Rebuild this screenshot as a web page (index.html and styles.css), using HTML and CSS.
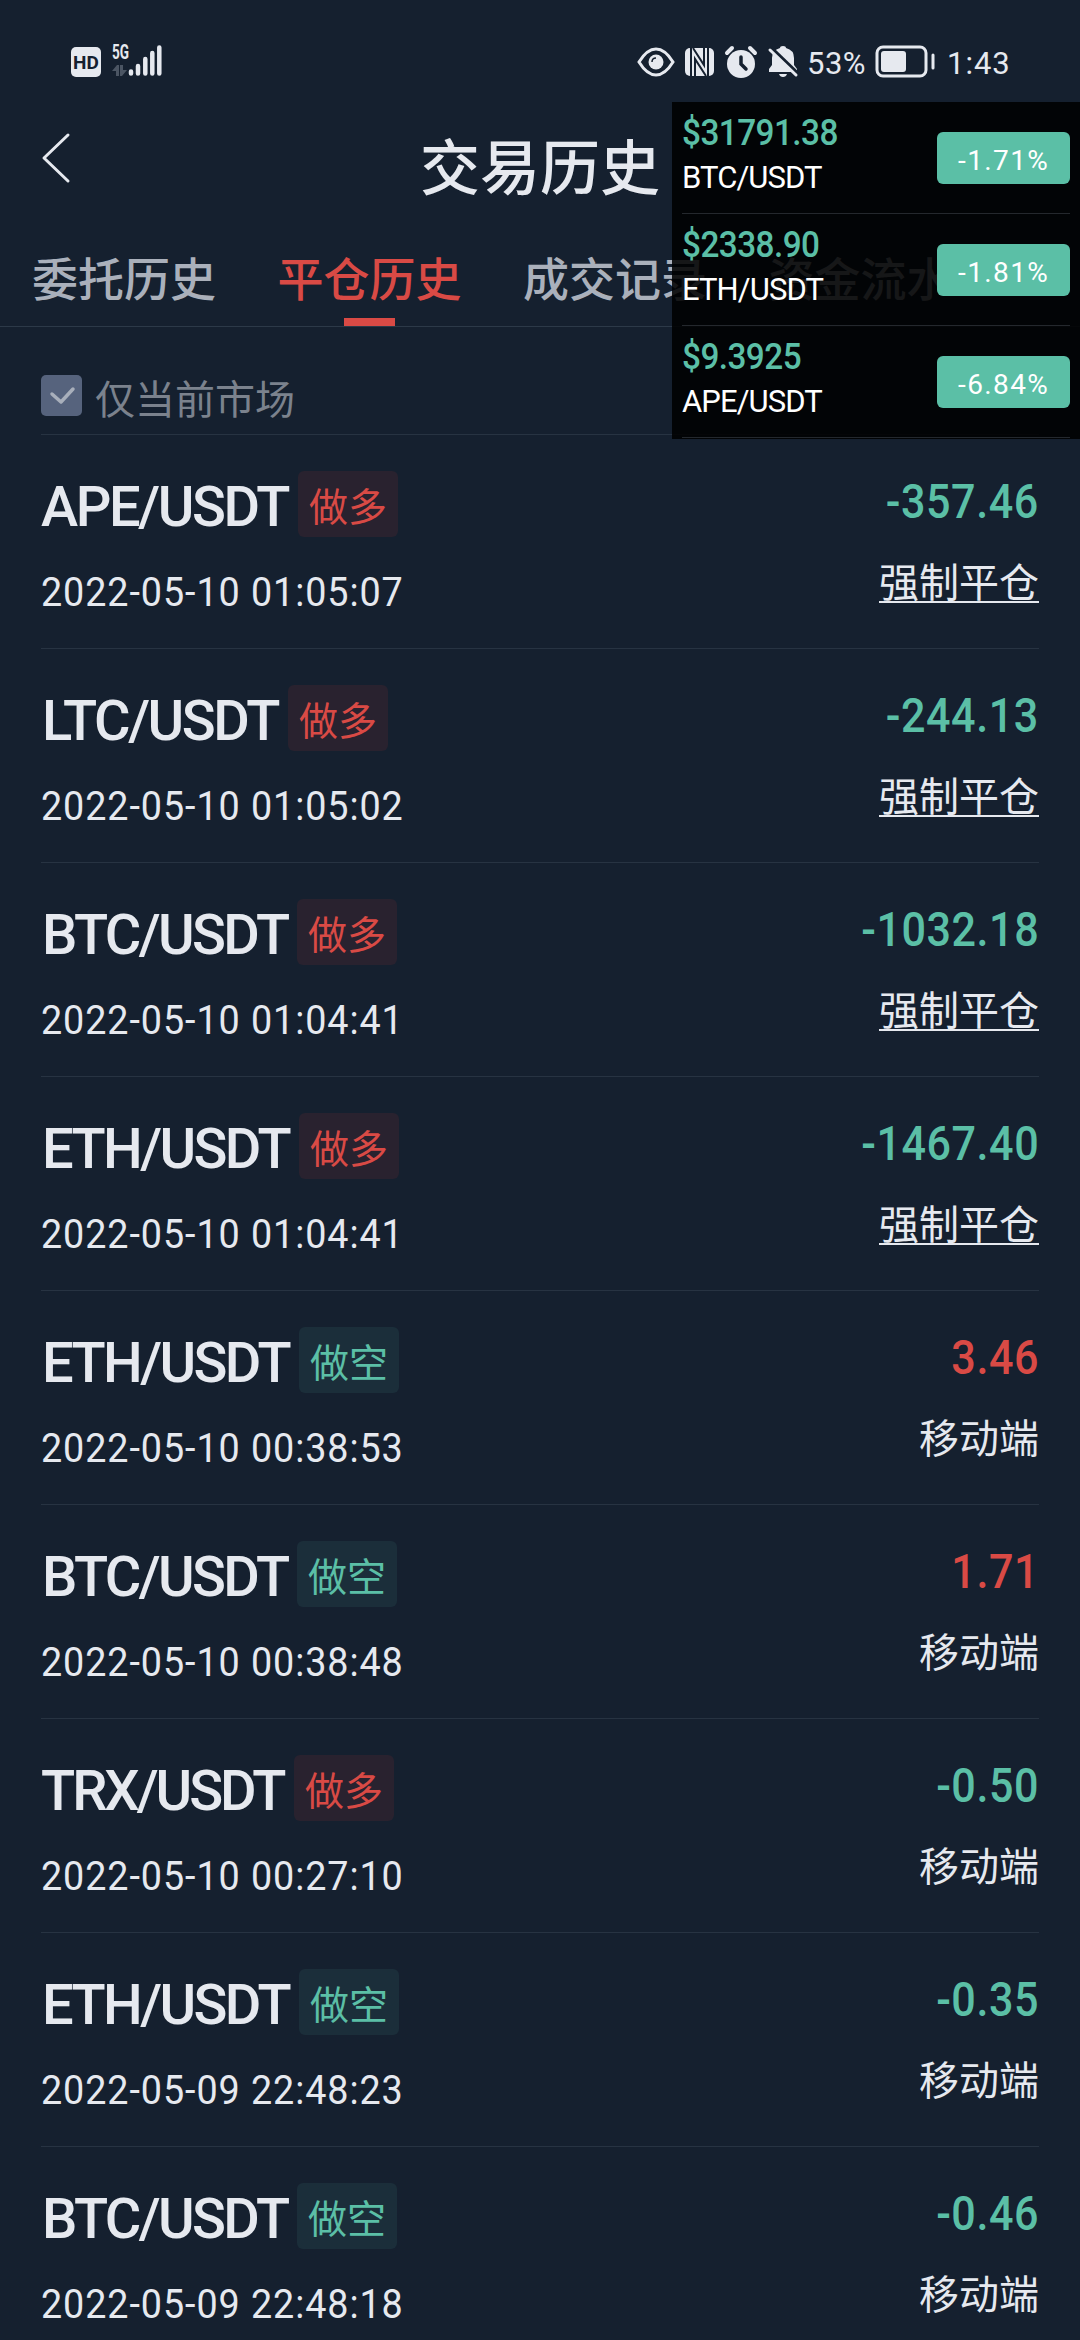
FILE: index.html
```html
<!DOCTYPE html>
<html lang="zh-CN">
<head>
<meta charset="utf-8">
<title>交易历史</title>
<link rel="stylesheet" href="styles.css">
</head>
<body>
<div class="screen">
  <div class="status">
    <div class="status-left">
      <span class="hd">HD</span>
      <svg class="signal" width="50" height="34" viewBox="0 0 50 34">
        <text class="net" x="0" y="15" textLength="17" lengthAdjust="spacingAndGlyphs">5G</text>
        <path class="arrows" d="M0 27l5-6h2v11H4v-5ZM8 21h3v5h4l-5 6H8Z"/>
        <path class="bars" d="M19 27.500v2M26 22v7.500M33.300 15v14.500M40.300 9v20.500M47.300 3.500v26"/>
      </svg>
    </div>
    <div class="status-right">
      <svg class="icons" width="168" height="36" viewBox="0 0 168 36">
        <path class="line" d="M2 18Q10 5 19 5T36 18Q28 31 19 31T2 18Z"/>
        <circle class="fill" cx="19" cy="18" r="7.500"/>
        <path class="cut-thin" d="M15 18q0-4 4-4"/>
        <rect class="fill" x="48" y="4" width="29" height="28" rx="5"/>
        <path class="cut-line" d="M54 4v28M71 4v28M58 32V15l11 17M67 4v17L56 4"/>
        <circle class="fill" cx="104" cy="20" r="14"/>
        <path class="ears" d="M90 9l5-5M113 4l5 5"/>
        <path class="cut" d="M104 13v7l5 5"/>
        <path class="fill" d="M132 28v-3l3-4v-7q0-8 8-10q0-2 3-2t3 2q8 2 8 10v7l3 4v3ZM142 30h8q-1 3-4 3t-4-3Z"/>
        <path class="cut-wide" d="M134 4l28 27"/>
        <path class="line" d="M133 6l26 25"/>
      </svg>
      <span class="percent">53%</span>
      <svg class="battery" width="62" height="34" viewBox="0 0 62 34">
        <rect class="line" x="2" y="2" width="49" height="29" rx="6"/>
        <rect class="fill" x="6" y="6" width="25" height="21" rx="3"/>
        <path class="line" d="M58 10v13"/>
      </svg>
      <span class="clock">1:43</span>
    </div>
  </div>

  <header class="header">
    <svg class="back" width="32" height="52" viewBox="0 0 32 52"><path d="M28 3L4 26l24 23"/></svg>
    <h1 class="title">交易历史</h1>
  </header>

  <nav class="tabs">
    <span class="tab">委托历史</span>
    <span class="tab tab-active">平仓历史</span>
    <span class="tab">成交记录</span>
    <span class="tab">资金流水</span>
  </nav>

  <main class="content">
    <div class="filter">
      <svg class="check" width="41" height="41" viewBox="0 0 41 41"><rect width="41" height="41" rx="5"/><path d="M11 19l9 8 12-13"/></svg>
      <span class="filter-label">仅当前市场</span>
    </div>

    <div class="row">
      <div class="left"><div class="head"><span class="pair ape">APE/USDT</span><span class="side long">做多</span></div><div class="date">2022-05-10 01:05:07</div></div>
      <div class="right"><div class="amount down">-357.46</div><div class="reason forced">强制平仓</div></div>
    </div>
    <div class="row">
      <div class="left"><div class="head"><span class="pair ltc">LTC/USDT</span><span class="side long">做多</span></div><div class="date">2022-05-10 01:05:02</div></div>
      <div class="right"><div class="amount down">-244.13</div><div class="reason forced">强制平仓</div></div>
    </div>
    <div class="row">
      <div class="left"><div class="head"><span class="pair btc">BTC/USDT</span><span class="side long">做多</span></div><div class="date">2022-05-10 01:04:41</div></div>
      <div class="right"><div class="amount down">-1032.18</div><div class="reason forced">强制平仓</div></div>
    </div>
    <div class="row">
      <div class="left"><div class="head"><span class="pair eth">ETH/USDT</span><span class="side long">做多</span></div><div class="date">2022-05-10 01:04:41</div></div>
      <div class="right"><div class="amount down">-1467.40</div><div class="reason forced">强制平仓</div></div>
    </div>
    <div class="row">
      <div class="left"><div class="head"><span class="pair eth">ETH/USDT</span><span class="side short">做空</span></div><div class="date">2022-05-10 00:38:53</div></div>
      <div class="right"><div class="amount up">3.46</div><div class="reason">移动端</div></div>
    </div>
    <div class="row">
      <div class="left"><div class="head"><span class="pair btc">BTC/USDT</span><span class="side short">做空</span></div><div class="date">2022-05-10 00:38:48</div></div>
      <div class="right"><div class="amount up">1.71</div><div class="reason">移动端</div></div>
    </div>
    <div class="row">
      <div class="left"><div class="head"><span class="pair trx">TRX/USDT</span><span class="side long">做多</span></div><div class="date">2022-05-10 00:27:10</div></div>
      <div class="right"><div class="amount down">-0.50</div><div class="reason">移动端</div></div>
    </div>
    <div class="row">
      <div class="left"><div class="head"><span class="pair eth">ETH/USDT</span><span class="side short">做空</span></div><div class="date">2022-05-09 22:48:23</div></div>
      <div class="right"><div class="amount down">-0.35</div><div class="reason">移动端</div></div>
    </div>
    <div class="row">
      <div class="left"><div class="head"><span class="pair btc">BTC/USDT</span><span class="side short">做空</span></div><div class="date">2022-05-09 22:48:18</div></div>
      <div class="right"><div class="amount down">-0.46</div><div class="reason">移动端</div></div>
    </div>
  </main>

  <aside class="ticker">
    <div class="quote"><div><div class="price">$31791.38</div><div class="symbol">BTC/USDT</div></div><span class="change">-1.71%</span></div>
    <div class="quote"><div><div class="price">$2338.90</div><div class="symbol">ETH/USDT</div></div><span class="change">-1.81%</span></div>
    <div class="quote"><div><div class="price">$9.3925</div><div class="symbol">APE/USDT</div></div><span class="change">-6.84%</span></div>
  </aside>
</div>
</body>
</html>
```
FILE: styles.css
```css
* { box-sizing: border-box; }
body { margin: 0; background: #15202f; }

.screen {
  position: relative;
  width: 1080px;
  height: 2340px;
  overflow: hidden;
  background: #15202f;
  color: #e6e9ef;
  font-family: Roboto, "Noto Sans CJK SC", sans-serif;
  white-space: nowrap;
}

/* Status bar */
.status {
  display: flex;
  justify-content: space-between;
  height: 102px;
  padding: 44px 71px 0 71px;
}
.status-left, .status-right { display: flex; align-items: flex-start; }
.hd {
  width: 30px;
  height: 30px;
  margin-top: 3px;
  border-radius: 5px;
  background: #e6e9ef;
  color: #15202f;
  font: 700 19px/31px Roboto, sans-serif;
  text-align: center;
}
.signal { margin-left: 11px; overflow: visible; }
.net { fill: #e6e9ef; font: 700 20px Roboto, sans-serif; }
.arrows { fill: #4b5563; }
.bars { fill: none; stroke: #e6e9ef; stroke-width: 4.500; stroke-linecap: round; }
.fill { fill: #e6e9ef; }
.line { fill: none; stroke: #e6e9ef; stroke-width: 3; stroke-linecap: round; }
.ears { fill: none; stroke: #e6e9ef; stroke-width: 4; stroke-linecap: round; }
.cut { fill: none; stroke: #15202f; stroke-width: 3.500; stroke-linecap: round; }
.cut-thin { fill: none; stroke: #15202f; stroke-width: 1.500; }
.cut-line { fill: none; stroke: #15202f; stroke-width: 2; }
.cut-wide { fill: none; stroke: #15202f; stroke-width: 4; }
.icons { margin-right: 2px; }
.percent, .clock { font-size: 31px; line-height: 39px; }
.percent { width: 68px; letter-spacing: 0.500px; }
.battery { margin-top: 1px; }
.clock { width: 62px; margin-left: 10px; letter-spacing: 1px; }

/* Title bar */
.header {
  display: grid;
  grid-template-columns: 80px 1fr 80px;
  height: 132px;
}
.back { margin: 30px 0 0 40px; fill: none; stroke: #e6e9ef; stroke-width: 3; stroke-linecap: round; stroke-linejoin: round; }
.title {
  margin: 18px 0 0;
  font: 500 60px/88px "Noto Sans CJK SC", sans-serif;
  text-align: center;
}

/* Tabs */
.tabs {
  display: flex;
  gap: 61.500px;
  height: 93px;
  padding-left: 32px;
  border-bottom: 1px solid #2c3948;
}
.tab {
  display: flex;
  flex-direction: column;
  align-items: center;
  justify-content: space-between;
  color: #aab0bb;
  font: 500 46px/84px "Noto Sans CJK SC", sans-serif;
}
.tab-active { color: #d94a45; }
.tab-active::after { content: ""; width: 51px; height: 8px; background: #d94a45; flex: none; }

/* History list */
.content { padding: 0 41px; }
.filter {
  display: flex;
  align-items: flex-start;
  gap: 13px;
  height: 108px;
  padding-top: 46px;
  border-bottom: 1px solid #273342;
  color: #7b828d;
  font: 400 40px/48px "Noto Sans CJK SC", sans-serif;
}
.check { margin-top: 2px; }
.check rect { fill: #56637d; }
.check path { fill: none; stroke: #a8afbb; stroke-width: 3.500; stroke-linecap: round; stroke-linejoin: round; }
.row {
  display: flex;
  justify-content: space-between;
  height: 214px;
  padding-top: 36px;
  border-bottom: 1px solid #273342;
}
.head { display: flex; height: 66px; }
.pair { font-size: 56px; font-weight: 500; line-height: 72px; letter-spacing: -2.600px; }
.ape { width: 257px; letter-spacing: -2.400px; }
.ltc { width: 247px; padding-left: 1px; letter-spacing: -2.400px; }
.btc { width: 256px; padding-left: 1px; }
.eth { width: 258px; padding-left: 1px; }
.trx { width: 253px; letter-spacing: -3px; }
.side {
  width: 100px;
  border-radius: 6px;
  font: 400 39px/67px "Noto Sans CJK SC", sans-serif;
  text-align: center;
}
.long { background: #29222f; color: #d94a45; }
.short { background: #1b2e3a; color: #5bbfa6; }
.date {
  margin-top: 31px;
  font-size: 41px;
  line-height: 48px;
  letter-spacing: 1px;
  transform: scaleX(0.92);
  transform-origin: left;
}
.right { text-align: right; }
.amount {
  height: 60px;
  font-size: 49px;
  font-weight: 500;
  line-height: 62px;
  letter-spacing: 0.600px;
  transform: scaleX(0.88);
  transform-origin: right;
}
.down { color: #5bbfa6; }
.up { color: #d94a45; }
.reason { margin-top: 24px; font: 400 40px/50px "Noto Sans CJK SC", sans-serif; }
.forced { text-decoration: underline; text-decoration-thickness: 2px; text-underline-offset: 4px; text-decoration-skip-ink: none; }

/* Floating price ticker */
.ticker {
  position: absolute;
  top: 102px;
  right: 0;
  width: 408px;
  height: 337px;
  padding: 0 10px;
  background: rgba(0, 0, 0, 0.87);
}
.quote {
  display: flex;
  justify-content: space-between;
  height: 112px;
  border-bottom: 1px solid #24282d;
}
.price {
  margin-top: 9px;
  color: #5bbfa6;
  font-size: 37px;
  font-weight: 500;
  line-height: 43px;
  letter-spacing: -0.600px;
  transform: scaleX(0.9);
  transform-origin: left;
}
.symbol { margin-top: 3px; color: #fff; font-size: 31px; line-height: 42px; letter-spacing: -0.900px; }
.change {
  width: 133px;
  height: 52px;
  margin-top: 30px;
  padding-left: 21px;
  border-radius: 6px;
  background: #5bbfa6;
  color: #fff;
  font-size: 28px;
  line-height: 57px;
  letter-spacing: 1.400px;
}
```
